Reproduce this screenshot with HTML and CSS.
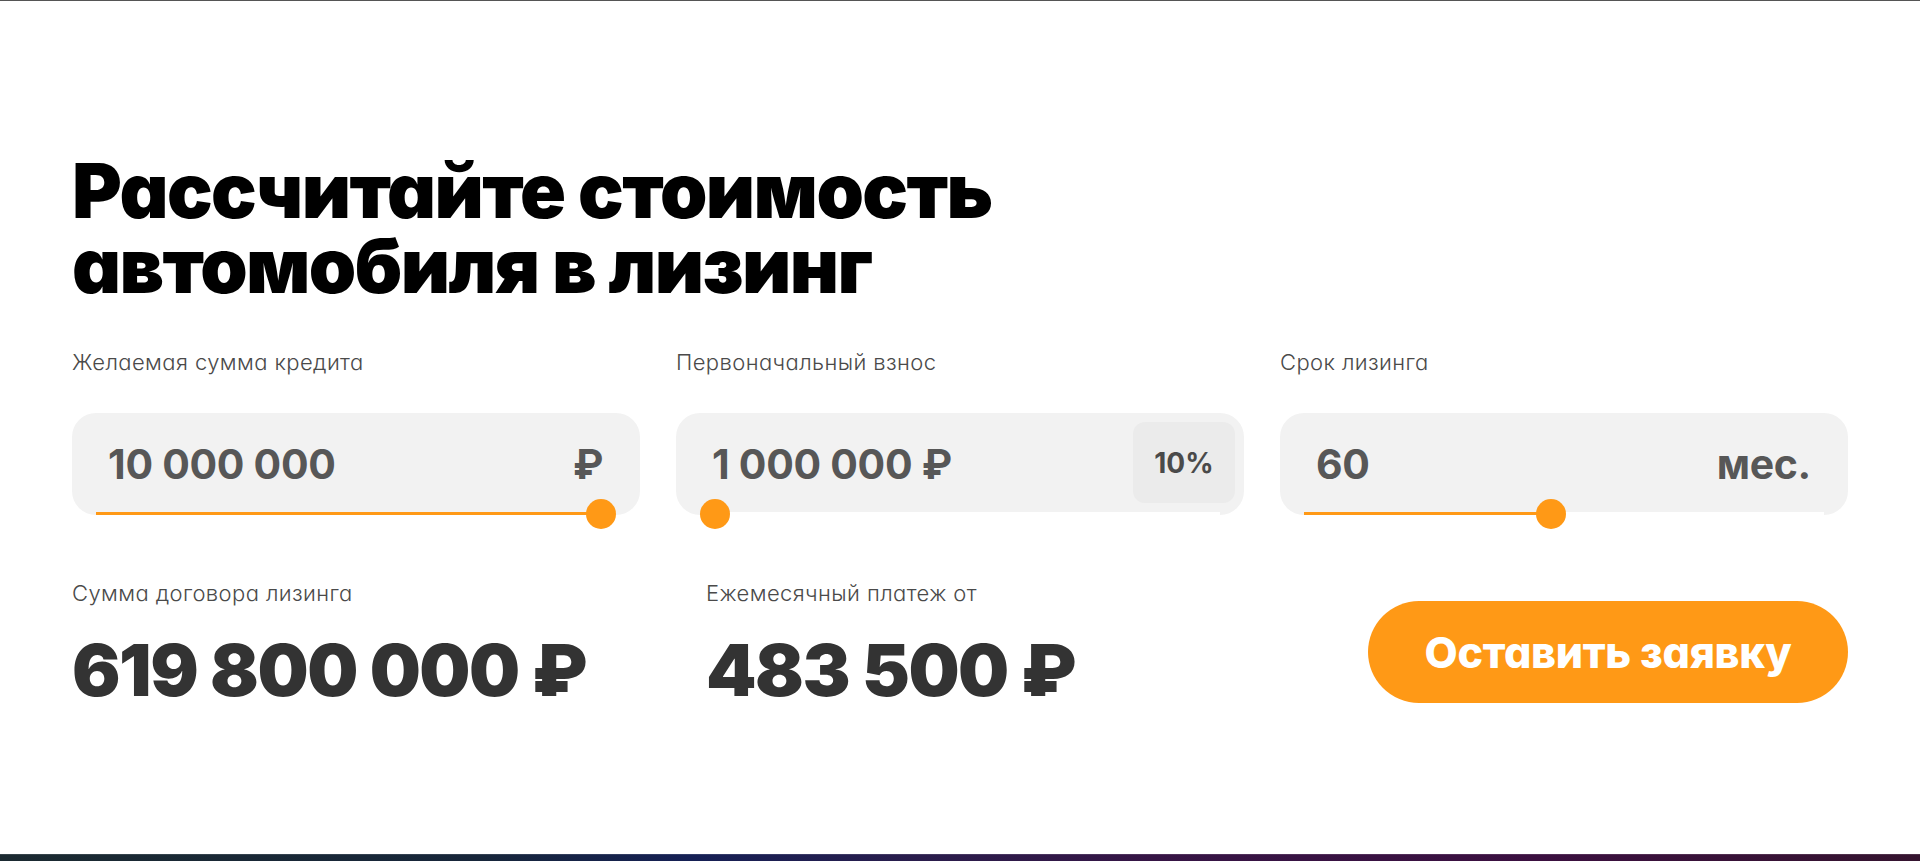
FILE: index.html
```html
<!DOCTYPE html>
<html lang="ru">
<head>
<meta charset="utf-8">
<title>Лизинг — калькулятор</title>
<link rel="stylesheet" href="styles.css">
</head>
<body>
<div class="page">
  <main class="calc">
    <h1 class="title"><span class="title-line">Рассчитайте стоимость</span><span class="title-line">автомобиля в лизинг</span></h1>

    <div class="fields">
      <div class="field">
        <div class="label">Желаемая сумма кредита</div>
        <div class="box">
          <span class="value">10 000 000</span>
          <span class="unit">₽</span>
          <div class="track">
            <div class="fill" style="width: 505px"></div>
            <div class="thumb" style="left: 490px"></div>
          </div>
        </div>
      </div>

      <div class="field">
        <div class="label">Первоначальный взнос</div>
        <div class="box">
          <span class="value">1 000 000 ₽</span>
          <span class="badge">10%</span>
          <div class="track">
            <div class="fill" style="width: 0px"></div>
            <div class="thumb" style="left: 0px"></div>
          </div>
        </div>
      </div>

      <div class="field">
        <div class="label">Срок лизинга</div>
        <div class="box">
          <span class="value">60</span>
          <span class="unit">мес.</span>
          <div class="track">
            <div class="fill" style="width: 247px"></div>
            <div class="thumb" style="left: 232px"></div>
          </div>
        </div>
      </div>
    </div>

    <div class="results">
      <div class="result result-sum">
        <div class="label">Сумма договора лизинга</div>
        <div class="big">619 800 000 ₽</div>
      </div>
      <div class="result">
        <div class="label">Ежемесячный платеж от</div>
        <div class="big">483 500 ₽</div>
      </div>
      <button class="cta" type="button">Оставить заявку</button>
    </div>
  </main>
  <div class="strip"></div>
</div>
</body>
</html>
```

FILE: styles.css
```css
* { box-sizing: border-box; }

html, body {
  margin: 0;
  padding: 0;
  background: #fff;
}

body {
  font-family: Inter, "Noto Sans", "DejaVu Sans", sans-serif;
  font-feature-settings: "cv11";
  color: #333;
}

.page {
  height: 861px;
  border-top: 1px solid #555;
  display: flex;
  flex-direction: column;
  overflow: hidden;
}

.calc {
  padding: 152px 72px 0;
}

.title {
  margin: 0;
  font-size: 76px;
  line-height: 75px;
  font-weight: 900;
  color: #000;
  letter-spacing: -1.6px;
}

.title-line {
  display: block;
  height: 75px;
}

.fields {
  display: grid;
  grid-template-columns: 568px 568px 568px;
  column-gap: 36px;
  margin-top: 47px;
}

.label {
  font-size: 22px;
  line-height: 24px;
  font-weight: 300;
  color: #4a4a4a;
  letter-spacing: 0.4px;
}

.box {
  position: relative;
  margin-top: 39px;
  height: 102px;
  border-radius: 24px;
  background: #f2f2f2;
  display: flex;
  align-items: center;
  justify-content: space-between;
  padding: 0 37px 0 36px;
}

.value, .unit {
  font-size: 41px;
  line-height: 41px;
  font-weight: 700;
  color: #575757;
  letter-spacing: -0.3px;
}

.badge {
  position: absolute;
  top: 9px;
  right: 9px;
  width: 102px;
  height: 81px;
  border-radius: 12px;
  background: #ebebeb;
  display: flex;
  align-items: center;
  justify-content: center;
  font-size: 28px;
  font-weight: 700;
  color: #4a4a4a;
}

.track {
  position: absolute;
  left: 24px;
  right: 24px;
  bottom: 0;
  height: 3px;
  background: #fff;
}

.fill {
  height: 3px;
  background: #ff9916;
}

.thumb {
  position: absolute;
  top: -13.5px;
  width: 30px;
  height: 30px;
  border-radius: 50%;
  background: #ff9916;
}

.results {
  display: flex;
  align-items: flex-start;
  margin-top: 66px;
}

.result-sum {
  width: 634px;
}

.big {
  margin-top: 29px;
  font-size: 72px;
  line-height: 72px;
  font-weight: 900;
  color: #333;
  letter-spacing: -1.5px;
}

.cta {
  margin-left: auto;
  margin-top: 20px;
  width: 480px;
  height: 102px;
  border: 0;
  border-radius: 51px;
  background: #ff9916;
  color: #fff;
  font-family: inherit;
  font-feature-settings: "cv11";
  font-size: 43px;
  font-weight: 800;
  letter-spacing: -0.3px;
  cursor: pointer;
}

.strip {
  margin-top: auto;
  height: 7px;
  background: linear-gradient(90deg, #1b2a31 0%, #17263a 25%, #152055 36%, #2a1d4c 48%, #361545 60%, #3b1040 80%, #35142f 100%);
  box-shadow: inset 0 1px 0 rgba(255, 255, 255, 0.12);
}
```
